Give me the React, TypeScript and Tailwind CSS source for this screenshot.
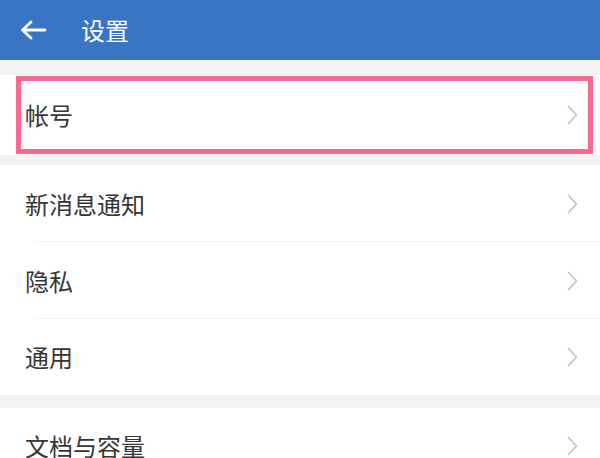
import React from 'react';

const FONT = { fontFamily: '"Noto Sans CJK SC", "Noto Sans", sans-serif' };

function Chevron() {
  return (
    <svg width="11" height="20" viewBox="0 0 11 20" className="shrink-0">
      <path d="M1.5 1.5 L9.5 10 L1.5 18.5" fill="none" stroke="#c4c4c4" strokeWidth="1.8" strokeLinecap="round" strokeLinejoin="round" />
    </svg>
  );
}

function Row({ label, h, divider }: { label: string; h: string; divider?: boolean }) {
  return (
    <div className={`relative flex items-center justify-between pl-[25px] pr-[22px] ${h}`}>
      <span className="text-[24px] text-[#363636] leading-none">{label}</span>
      <Chevron />
      {divider && <div className="absolute bottom-0 left-[36px] right-0 h-px bg-[#f2f2f2]" />}
    </div>
  );
}

export default function App() {
  return (
    <div className="w-[600px] h-[458px] overflow-hidden bg-[#f2f3f5]" style={FONT}>
      {/* Header */}
      <div className="h-[60px] bg-[#3a74c5] flex items-center pl-[20px]">
        <svg width="27" height="20" viewBox="0 0 27 20">
          <path d="M25 10 H3 M11 2 L2.5 10 L11 18" fill="none" stroke="#ffffff" strokeWidth="2.8" strokeLinecap="round" strokeLinejoin="round" />
        </svg>
        <span className="ml-[34px] text-[24px] text-white leading-none">设置</span>
      </div>

      <div className="h-[15px]" />

      {/* Account */}
      <div className="relative bg-white">
        <Row label="帐号" h="h-[80px]" />
        <div className="absolute left-[16px] top-[1px] w-[577px] h-[78px] border-[5px] border-[#fd6890]" />
      </div>

      <div className="h-[10px]" />

      <div className="bg-white">
        <Row label="新消息通知" h="h-[77px]" divider />
        <Row label="隐私" h="h-[77px]" divider />
        <Row label="通用" h="h-[76px]" />
      </div>

      <div className="h-[13px]" />

      <div className="bg-white">
        <Row label="文档与容量" h="h-[76px]" />
      </div>
    </div>
  );
}
